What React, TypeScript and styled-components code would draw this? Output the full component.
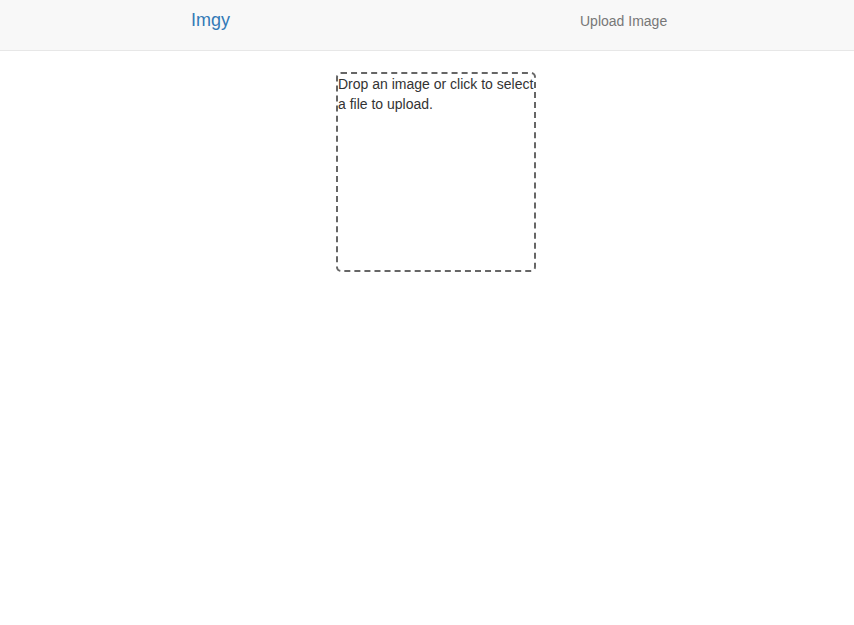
import React from "react";
import styled, { createGlobalStyle } from "styled-components";

const GlobalStyle = createGlobalStyle`
  *, *::before, *::after { box-sizing: border-box; }
  html, body { margin: 0; padding: 0; background: #fff; }
  body {
    font-family: "Liberation Sans", Arial, Helvetica, sans-serif;
    font-size: 14px;
    line-height: 20px;
    color: #333;
  }
`;

const Navbar = styled.nav`
  height: 51px;
  background: #f8f8f8;
  border-bottom: 1px solid #e7e7e7;
  display: grid;
  grid-template-columns: 389px auto;
  align-items: baseline;
  padding: 10px 0 0 191px;
`;

const Brand = styled.a`
  font-size: 18px;
  line-height: 20px;
  color: #337ab7;
  text-decoration: none;
  cursor: pointer;
`;

const NavLink = styled.a`
  font-size: 14px;
  line-height: 20px;
  color: #777;
  text-decoration: none;
  cursor: pointer;
`;

const Main = styled.main`
  padding: 21px 0 0 336px;
`;

const Dropzone = styled.div`
  width: 200px;
  height: 200px;
  border: 2px dashed #666;
  border-radius: 5px;
  cursor: pointer;
`;

const Hint = styled.div`
  font-size: 14px;
  line-height: 20px;
  color: #333;
`;

export default function App() {
  return (
    <>
      <GlobalStyle />
      <Navbar>
        <Brand>Imgy</Brand>
        <NavLink>Upload Image</NavLink>
      </Navbar>
      <Main>
        <Dropzone>
          <Hint>Drop an image or click to select a file to upload.</Hint>
        </Dropzone>
      </Main>
    </>
  );
}
